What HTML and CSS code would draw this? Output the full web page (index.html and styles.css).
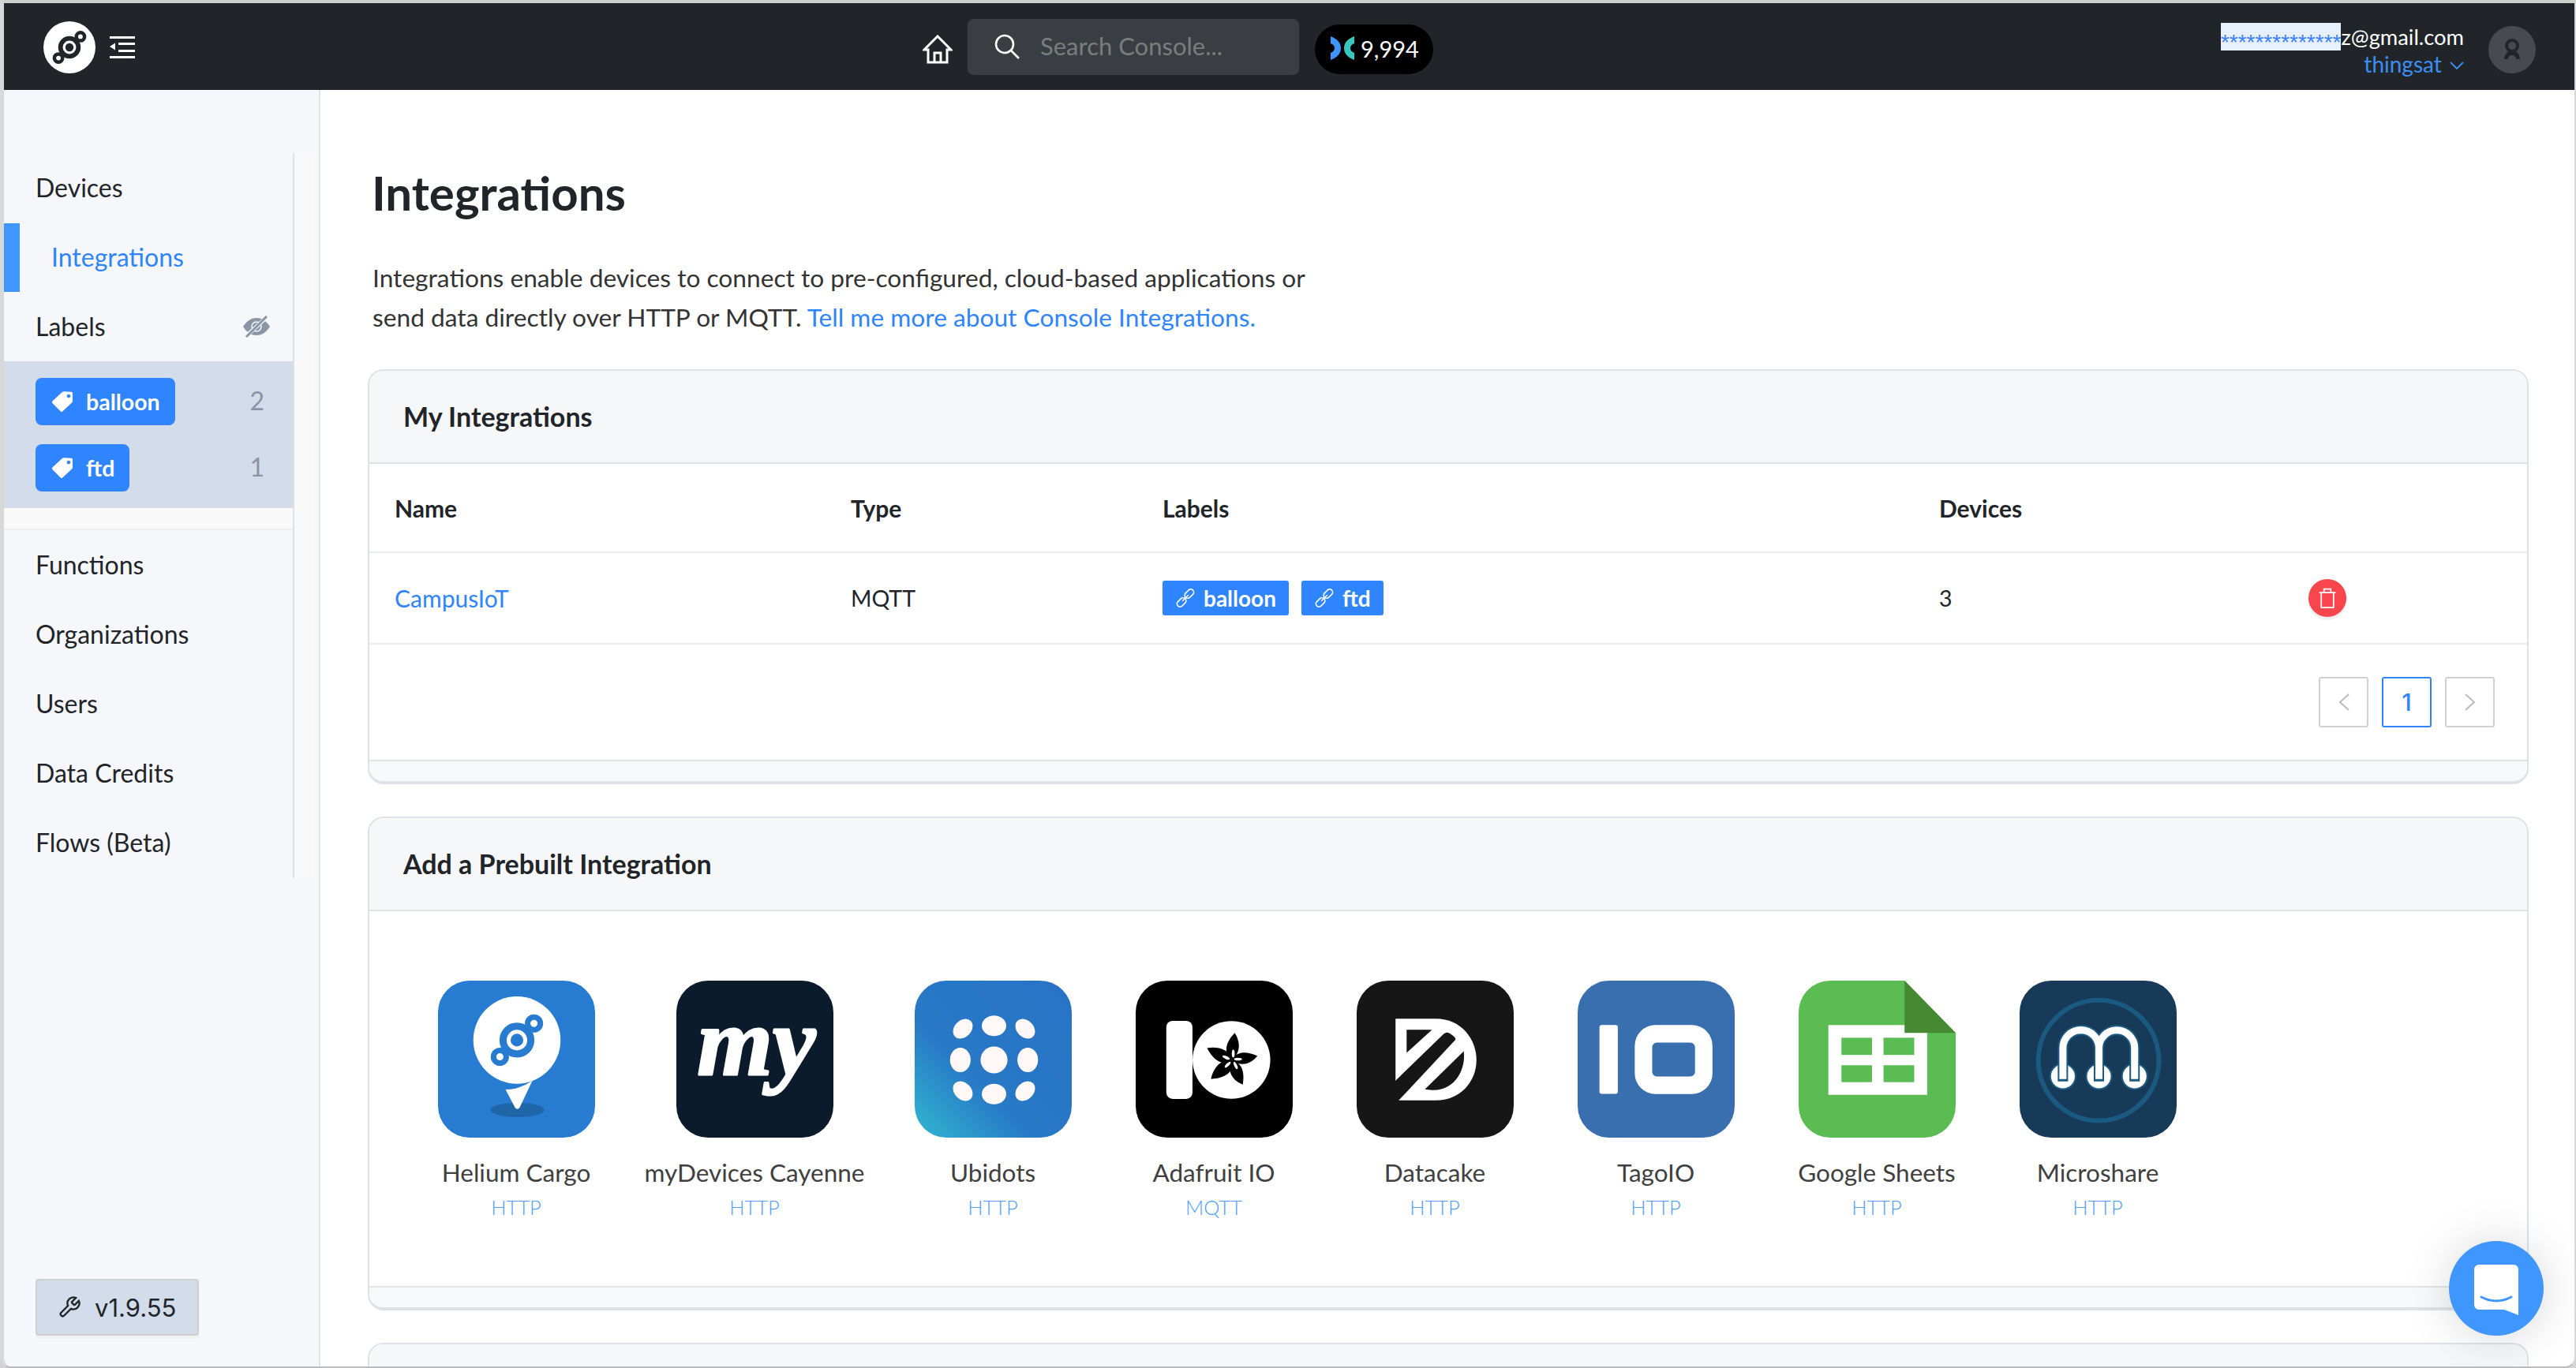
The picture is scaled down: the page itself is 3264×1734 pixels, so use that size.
FILE: index.html
```html
<!DOCTYPE html>
<html lang="en">
<head>
<meta charset="utf-8">
<title>Integrations</title>
<link rel="stylesheet" href="styles.css">
</head>
<body>
<svg class="defs" width="0" height="0" aria-hidden="true">
  <symbol id="tag" viewBox="0 0 26 26">
    <path d="M0.600 12.300 12.800 1Q13.700 .2 15 .2L24.500 .8Q26 1 26 2.500V12.500Q26 13.500 25.200 14.200L13.200 25.400Q12 26.400 10.800 25.400L.600 15.300Q-.600 13.800 .600 12.300Z M21 3.800a2.300 2.300 0 1 0 .01 0Z" fill="#fff" fill-rule="evenodd"/>
  </symbol>
  <symbol id="link" viewBox="0 0 24 24">
    <g fill="none" stroke="#fff" stroke-width="1.500">
      <rect x="13" y="1" width="7" height="12" rx="3.500" transform="rotate(45 16.500 7)"/>
      <rect x="4" y="11" width="7" height="12" rx="3.500" transform="rotate(45 7.500 17)"/>
      <path d="M8.500 15.500 15.500 8.500"/>
    </g>
  </symbol>
  <symbol id="helium" viewBox="-34 -34 68 68">
    <circle r="17.500" fill="none" stroke="currentColor" stroke-width="9"/>
    <circle r="8" fill="currentColor"/>
    <circle cx="21.500" cy="-21" r="8" fill="#fff" stroke="currentColor" stroke-width="7"/>
    <circle cx="-21.500" cy="21" r="8" fill="#fff" stroke="currentColor" stroke-width="7"/>
  </symbol>
</svg>
<div class="window">
  <header class="topbar">
    <div class="brand">
      <span class="brand-logo"><svg class="brand-mark"><use href="#helium"/></svg></span>
      <svg class="menu-icon" viewBox="0 0 32 28"><g fill="#fff"><rect width="32" height="3"/><rect x="11" y="8" width="21" height="3"/><rect x="11" y="17" width="21" height="3"/><rect y="25" width="32" height="3"/><path d="M0 13 7 8.500V17.500Z"/></g></svg>
    </div>
    <svg class="home-icon" viewBox="0 0 38 37" fill="none" stroke="#fff" stroke-width="3"><path d="M2 19 19 2l17 17h-5v16H7V19Z"/><path d="M15 35V23h8v12"/></svg>
    <div class="search">
      <svg class="search-icon" viewBox="0 0 32 32" fill="none" stroke="#fff" stroke-width="2.600"><circle cx="13" cy="13" r="11"/><path d="m21 21 10 10"/></svg>
      <span class="search-text">Search Console...</span>
    </div>
    <div class="credits">
      <svg class="credits-icon" viewBox="0 0 30 30"><path d="M0 0C8 3 13 8 13 15 13 22 8 27 0 30V21C3 20 5 18 5 15 5 12 3 10 0 9Z" fill="#3f96ff"/><path d="M30 0C22 3 17 8 17 15 17 22 22 27 30 30V21C27 20 25 18 25 15 25 12 27 10 30 9Z" fill="#38c6bd"/></svg>
      <span>9,994</span>
    </div>
    <div class="account">
      <div class="account-text">
        <div class="email"><span class="email-mask">**************</span><span>z@gmail.com</span></div>
        <div class="org">thingsat <svg class="org-chevron" viewBox="0 0 18 10" fill="none" stroke="#3b8ef3" stroke-width="1.800"><path d="m1 1 8 8 8-8"/></svg></div>
      </div>
      <div class="avatar"><svg viewBox="0 0 24 28" class="avatar-icon"><circle cx="12" cy="9" r="7" fill="none" stroke="#212529" stroke-width="4"/><path d="M2 26C2 20 6 17 8 16H16C18 17 22 20 22 26H17C17 23 15 21 12 21S7 23 7 26Z" fill="#212529"/></svg></div>
    </div>
  </header>
  <div class="body">
    <aside class="sidebar">
      <nav class="nav-track">
        <div class="nav">
          <div class="nav-item">Devices</div>
          <div class="nav-item nav-item-active">Integrations</div>
          <div class="nav-item nav-item-split">Labels
            <svg class="eye-icon" viewBox="0 0 34 28"><path d="M0 14C5 6 11 3 17 3S29 6 34 14C29 22 23 25 17 25S5 22 0 14Z" fill="#8a96a8"/><circle cx="17" cy="14" r="6" fill="none" stroke="#f6f7fa" stroke-width="1.500"/><path d="M3 27 31 1" stroke="#f6f7fa" stroke-width="5"/><path d="M4 27 30 1" stroke="#8a96a8" stroke-width="3"/></svg>
          </div>
          <div class="labels">
            <div class="label-row"><span class="tag"><svg class="tag-icon"><use href="#tag"/></svg>balloon</span><span class="count">2</span></div>
            <div class="label-row"><span class="tag"><svg class="tag-icon"><use href="#tag"/></svg>ftd</span><span class="count">1</span></div>
          </div>
          <div class="nav-gap"></div>
          <div class="nav-item">Functions</div>
          <div class="nav-item">Organizations</div>
          <div class="nav-item">Users</div>
          <div class="nav-item">Data Credits</div>
          <div class="nav-item">Flows (Beta)</div>
        </div>
      </nav>
      <div class="version"><svg class="wrench" viewBox="0 0 24 24" fill="none" stroke="#212529" stroke-width="1.900"><path d="M14.700 6.300a1 1 0 0 0 0 1.400l1.600 1.600a1 1 0 0 0 1.400 0l3.770-3.770a6 6 0 0 1-7.940 7.940l-6.910 6.910a2.120 2.120 0 0 1-3-3l6.910-6.910a6 6 0 0 1 7.940-7.940l-3.760 3.760z"/></svg>v1.9.55</div>
    </aside>
    <main class="content">
      <h1 class="title">Integrations</h1>
      <p class="intro">Integrations enable devices to connect to pre-configured, cloud-based applications or<br>send data directly over HTTP or MQTT. <a class="link">Tell me more about Console Integrations.</a></p>

      <section class="card">
        <div class="card-head">My Integrations</div>
        <div class="row row-head">
          <div>Name</div><div>Type</div><div>Labels</div><div>Devices</div><div></div>
        </div>
        <div class="row row-data">
          <div class="link link-cell">CampusIoT</div>
          <div>MQTT</div>
          <div class="chips">
            <span class="chip"><svg class="chip-icon"><use href="#link"/></svg>balloon</span>
            <span class="chip"><svg class="chip-icon"><use href="#link"/></svg>ftd</span>
          </div>
          <div>3</div>
          <div><span class="delete"><svg viewBox="0 0 24 30" class="delete-icon" fill="none" stroke="#fff" stroke-width="2"><path d="M0 7H24"/><path d="M3 7V29H21V7"/><path d="M7 7V2H17V7"/></svg></span></div>
        </div>
        <div class="pager-wrap">
          <span class="pager-btn"><svg viewBox="0 0 14 22" class="pager-chev" fill="none" stroke="#bbb" stroke-width="2"><path d="M13 1 2 11l11 10"/></svg></span>
          <span class="pager-btn pager-current">1</span>
          <span class="pager-btn"><svg viewBox="0 0 14 22" class="pager-chev" fill="none" stroke="#bbb" stroke-width="2"><path d="m1 1 11 10L1 21"/></svg></span>
        </div>
        <div class="card-foot"></div>
      </section>

      <section class="card">
        <div class="card-head">Add a Prebuilt Integration</div>
        <div class="apps">
          <div class="app">
            <svg class="app-icon" viewBox="0 0 198 198"><rect width="198" height="198" rx="40" fill="#277bd0"/><ellipse cx="100" cy="163" rx="34" ry="9" fill="#1f66a8"/><circle cx="99.500" cy="75" r="55" fill="#fff"/><path d="M85 137Q103 137 119 126L103 160Q100 164 97 160Z" fill="#fff"/><path d="M80 133Q95 137 107 132Q96 138 85 137Z" fill="#277bd0"/><svg x="65.500" y="41" width="68" height="68" color="#277bd0"><use href="#helium"/></svg></svg>
            <div class="app-name">Helium Cargo</div><div class="app-type">HTTP</div>
          </div>
          <div class="app app-wide">
            <svg class="app-icon" viewBox="0 0 198 198"><rect width="198" height="198" rx="40" fill="#0b1b2b"/><text x="101" y="118" text-anchor="middle" class="my-text">my</text></svg>
            <div class="app-name">myDevices Cayenne</div><div class="app-type">HTTP</div>
          </div>
          <div class="app">
            <svg class="app-icon" viewBox="0 0 198 198"><defs><linearGradient id="ubi" x1="0" y1="1" x2="1" y2="0"><stop offset="0" stop-color="#30b8d0"/><stop offset=".38" stop-color="#2879c6"/><stop offset="1" stop-color="#2872c6"/></linearGradient></defs><rect width="198" height="198" rx="40" fill="url(#ubi)"/><g fill="#fff8f6"><ellipse cx="100" cy="100" rx="17" ry="17"/><ellipse cx="100" cy="57" rx="15.400" ry="13"/><ellipse cx="100" cy="143" rx="15.400" ry="13"/><ellipse cx="57.500" cy="100" rx="13" ry="15.400"/><ellipse cx="142.500" cy="100" rx="13" ry="15.400"/><ellipse cx="60.700" cy="60.700" rx="14" ry="10.500" transform="rotate(-45 60.700 60.700)"/><ellipse cx="139.300" cy="60.700" rx="14" ry="10.500" transform="rotate(45 139.300 60.700)"/><ellipse cx="60.700" cy="139.300" rx="14" ry="10.500" transform="rotate(45 60.700 139.300)"/><ellipse cx="139.300" cy="139.300" rx="14" ry="10.500" transform="rotate(-45 139.300 139.300)"/></g></svg>
            <div class="app-name">Ubidots</div><div class="app-type">HTTP</div>
          </div>
          <div class="app">
            <svg class="app-icon" viewBox="0 0 198 198"><rect width="198" height="198" rx="40" fill="#000"/><rect x="38.600" y="50.700" width="33" height="98.500" rx="8" fill="#fff"/><circle cx="120.700" cy="100" r="49" fill="#fff"/><g fill="#000"><path d="M120.700 100C108 88 117 74 125 66 131 76 134 90 120.700 100Z"/><path d="M120.700 100C129 87 142 90 153.500 95 146 104 134 110 120.700 100Z"/><path d="M120.700 100C136 104 137 118 135 131 124 127 114 116 120.700 100Z"/><path d="M120.700 100C125 116 112 123 95 124 97 112 106 99 120.700 100Z"/><path d="M120.700 100C108 108 98 100 90 85 103 83 118 86 120.700 100Z"/></g><g fill="#fff"><ellipse cx="123" cy="92" rx="1.800" ry="5"/><ellipse cx="129" cy="99" rx="5" ry="1.800"/><ellipse cx="126" cy="107" rx="1.800" ry="5" transform="rotate(-25 126 107)"/><ellipse cx="116" cy="106" rx="1.800" ry="5" transform="rotate(45 116 106)"/><ellipse cx="114" cy="97" rx="5" ry="1.800" transform="rotate(25 114 97)"/></g></svg>
            <div class="app-name">Adafruit IO</div><div class="app-type">MQTT</div>
          </div>
          <div class="app">
            <svg class="app-icon" viewBox="0 0 198 198"><rect width="198" height="198" rx="40" fill="#161616"/><path d="M49 48H100C132 48 151 74 151 100 151 128 130 151 100 151H53L49 126Z" fill="#fff"/><g fill="#161616"><path d="M63 62H95L63 91Z"/><path d="M45 130 110 67Q114 64 118 67L122 70Q126 73 124 75L53 151H45Z"/><path d="M86 137 135 89C138 110 125 139 95 138Z"/></g></svg>
            <div class="app-name">Datacake</div><div class="app-type">HTTP</div>
          </div>
          <div class="app">
            <svg class="app-icon" viewBox="0 0 198 198"><rect width="198" height="198" rx="40" fill="#396fae"/><rect x="27.500" y="56" width="23.200" height="86.700" rx="3" fill="#fff"/><path fill="#fff" fill-rule="evenodd" d="M98 56h46a26 26 0 0 1 26 26v35a26 26 0 0 1-26 26H98a26 26 0 0 1-26-26V82a26 26 0 0 1 26-26Zm2 22a6 6 0 0 0-6 6v31a6 6 0 0 0 6 6h42a6 6 0 0 0 6-6V84a6 6 0 0 0-6-6Z"/></svg>
            <div class="app-name">TagoIO</div><div class="app-type">HTTP</div>
          </div>
          <div class="app">
            <svg class="app-icon" viewBox="0 0 198 198"><path d="M40 0H133.600L198 66V158A40 40 0 0 1 158 198H40A40 40 0 0 1 0 158V40A40 40 0 0 1 40 0Z" fill="#5bbc53"/><rect x="37.500" y="56" width="124.500" height="88" fill="#fff"/><path d="M133.600 0 198 66H133.600Z" fill="#458a33"/><g fill="#5bbc53"><rect x="54" y="72" width="38.500" height="21.700"/><rect x="107" y="72" width="38.700" height="21.700"/><rect x="54" y="106.700" width="38.500" height="21.300"/><rect x="107" y="106.700" width="38.700" height="21.300"/></g></svg>
            <div class="app-name">Google Sheets</div><div class="app-type">HTTP</div>
          </div>
          <div class="app">
            <svg class="app-icon" viewBox="0 0 198 198"><rect width="198" height="198" rx="40" fill="#173a58"/><circle cx="99.600" cy="100.700" r="76" fill="none" stroke="#1b5a80" stroke-width="6"/><g fill="#fff" stroke="#1b5a80" stroke-width="2"><circle cx="54.600" cy="120.700" r="16"/><circle cx="100" cy="120.700" r="16"/><circle cx="145" cy="120.700" r="16"/></g><path d="M54.600 127V85A22.700 22.700 0 0 1 100 85V127M100 85A22.500 22.500 0 0 1 145 85V127" fill="none" stroke="#1b5a80" stroke-width="13"/><path d="M54.600 124V85A22.700 22.700 0 0 1 100 85V124M100 85A22.500 22.500 0 0 1 145 85V124" fill="none" stroke="#fff" stroke-width="9"/></svg>
            <div class="app-name">Microshare</div><div class="app-type">HTTP</div>
          </div>
        </div>
        <div class="card-foot"></div>
      </section>

      <section class="card card-cut">
        <div class="card-head"></div>
      </section>
    </main>
  </div>
  <div class="chat">
    <svg class="chat-icon" viewBox="0 0 56 64"><path d="M6 0H50A6 6 0 0 1 56 6V64L38 57H6A6 6 0 0 1 0 51V6A6 6 0 0 1 6 0Z" fill="#fff"/><path d="M9 41Q28 51 47 41" fill="none" stroke="#3f96ff" stroke-width="3" stroke-linecap="round"/></svg>
  </div>
</div>
</body>
</html>
```

FILE: styles.css
```css
* { box-sizing: border-box; }
html, body { margin: 0; height: 100%; overflow: hidden; }
body {
  background: #d4d4d4;
  font-family: "Lato", "Liberation Sans", sans-serif;
  color: #212529;
}
.defs { position: absolute; }
.window {
  height: 1734px;
  border-top: 4px solid #cfcfcf;
  border-left: 5px solid #d8d8d8;
  border-right: 2px solid #d8d8d8;
  border-bottom: 2px solid #bdbdbd;
  border-radius: 0 0 14px 14px;
  background: #fff;
  overflow: hidden;
  display: flex;
  flex-direction: column;
  position: relative;
}

/* top bar */
.topbar {
  flex: none;
  height: 110px;
  background: #212529;
  display: flex;
  align-items: center;
}
.brand { width: 1164px; padding-left: 50px; display: flex; align-items: center; gap: 18px; margin-top: 2px; }
.brand-logo { width: 66px; height: 66px; border-radius: 50%; background: #fff; display: flex; align-items: center; justify-content: center; color: #212529; }
.brand-mark { width: 44px; height: 44px; }
.menu-icon { width: 32px; height: 28px; }
.home-icon { width: 38px; height: 37px; margin-top: 7px; }
.search {
  width: 420px; height: 71px; margin-left: 19px;
  background: #3a3e42; border-radius: 8px;
  display: flex; align-items: center; padding: 0 0 0 34px; gap: 26px;
}
.search-icon { width: 32px; height: 32px; }
.search-text { font-size: 31px; color: #7a7d80; padding-bottom: 2px; }
.credits {
  width: 150px; height: 63px; margin-left: 20px; margin-top: 6px;
  background: #000; border-radius: 32px;
  display: flex; align-items: center; padding: 0 0 2px 20px; gap: 8px;
  color: #fff; font-size: 29px;
}
.credits-icon { width: 30px; height: 30px; }
.account { margin-left: auto; padding-right: 49px; display: flex; align-items: center; gap: 31px; }
.account-text { margin-top: 8px; }
.email { font-size: 27.3px; line-height: 37px; color: #fff; display: flex; justify-content: flex-end; align-items: center; }
.email-mask { background: #e8f0fe; color: #3b82f6; height: 35px; padding-top: 14px; line-height: 21px; font-family: "Liberation Sans", sans-serif; font-size: 28px; }
.org { font-size: 28px; line-height: 33px; color: #3b8ef3; text-align: right; }
.org-chevron { width: 18px; height: 10px; margin-left: 3px; vertical-align: 4px; }
.avatar { width: 60px; height: 60px; border-radius: 50%; background: #474a4e; margin-top: 7px; display: flex; align-items: center; justify-content: center; }
.avatar-icon { width: 24px; height: 28px; }

/* layout */
.body { flex: 1; display: flex; min-height: 0; }

/* sidebar */
.sidebar {
  flex: none; width: 401px;
  background: #f6f7fa;
  border-right: 2px solid #dfe3ea;
  padding-top: 80px;
  display: flex; flex-direction: column; justify-content: space-between;
}
.nav-track { width: 394px; background: #f9f9f9; height: 919px; }
.nav { width: 368px; height: 100%; background: #f6f7fa; border-right: 2px solid #dee2e6; }
.nav-item { height: 88px; padding: 0 0 2px 40px; display: flex; align-items: center; font-size: 32px; }
.nav-item-active { color: #2f84ff; padding-left: 60px; position: relative; }
.nav-item-active::before { content: ""; position: absolute; left: 0; top: 1px; bottom: 0; width: 20px; background: #3f96ff; }
.nav-item-split { justify-content: space-between; padding-right: 29px; }
.eye-icon { width: 34px; height: 28px; margin-top: 2px; }
.labels { height: 186px; background: #d3dcea; padding: 21px 36px 0 40px; display: flex; flex-direction: column; gap: 24px; }
.label-row { display: flex; justify-content: space-between; align-items: center; height: 60px; }
.tag {
  height: 60px; padding: 0 19px 0 21px; background: #2f84ff; color: #fff; border-radius: 8px;
  display: flex; align-items: center; gap: 17px; font-size: 28.5px; font-weight: 700;
}
.tag-icon { width: 26px; height: 26px; }
.count { font-size: 32px; color: #8a94a6; padding-bottom: 4px; }
.nav-gap { height: 28px; background: #f9f9f9; border-bottom: 2px solid #eeeeee; }
.version {
  width: 207px; height: 72px; margin: 0 0 39px 40px;
  background: #d3dcea; border: 2px solid #cfcfcf; border-radius: 4px;
  box-shadow: 0 4px 0 #f0f1f4;
  display: flex; align-items: center; padding-left: 26px; gap: 17px;
  font-family: "Inter", sans-serif; font-size: 31px;
}
.wrench { width: 30px; height: 30px; }

/* content */
.content { flex: 1; min-width: 0; padding: 97px 58px 0 60px; overflow: hidden; }
.title { margin: 0 0 0 5px; height: 70px; line-height: 66px; font-size: 60px; font-weight: 700; color: #212529; }
.intro { margin: 46px 0 41px 6px; font-size: 31.7px; line-height: 50px; color: #333; }
.link { color: #2f84ff; }

.card { border: 2px solid #dee2e6; border-bottom-width: 4px; border-radius: 20px; margin-bottom: 41px; overflow: hidden; }
.card-head {
  height: 118px; background: #f6f7f9; border-bottom: 2px solid #dee2e6;
  padding: 0 0 2px 43px; display: flex; align-items: center;
  font-size: 34px; font-weight: 700; color: #212529;
}
.card-foot { height: 27px; background: #f8f9fa; border-top: 2px solid #e2e4e6; }
.card-cut { margin-bottom: 0; height: 200px; }

.row {
  display: grid; grid-template-columns: 578px 395px 984px 468px 1fr;
  padding-left: 32px; align-items: center; font-size: 30px;
  border-bottom: 2px solid #ececec;
}
.row-head { height: 113px; font-weight: 700; }
.row-data { height: 116px; font-size: 28.5px; }
.link-cell { font-size: 30px; }
.chips { display: flex; gap: 16px; }
.chip {
  height: 44px; padding: 0 16px; background: #2f84ff; color: #fff; border-radius: 3px;
  display: flex; align-items: center; gap: 10px; font-size: 28px; font-weight: 700;
}
.chip-icon { width: 26px; height: 26px; }
.delete { width: 48px; height: 48px; border-radius: 50%; background: #f9464c; box-shadow: 0 4px 0 #f0f0f0; display: flex; align-items: center; justify-content: center; }
.delete-icon { width: 22px; height: 26px; }
.pager-wrap { height: 146px; display: flex; justify-content: flex-end; gap: 17px; padding: 41px 41px 0 0; }
.pager-btn {
  width: 63px; height: 64px; border: 2px solid #d0d0d0; border-radius: 3px;
  display: flex; align-items: center; justify-content: center;
  font-size: 30px; font-weight: 500; color: #2f84ff; font-family: "Inter", sans-serif;
}
.pager-current { border-color: #2f84ff; }
.pager-chev { width: 14px; height: 22px; }

.apps { height: 475px; padding: 88px 0 0 86px; display: flex; gap: 80px; }
.app { width: 200px; flex: none; display: flex; flex-direction: column; align-items: center; }
.app-wide { width: 244px; }
.app-icon { width: 199px; height: 199px; flex: none; }
.app-name { margin-top: 24px; font-size: 31.5px; line-height: 40px; color: #404040; white-space: nowrap; }
.app-type { margin-top: 10px; font-size: 25.5px; line-height: 28px; color: #4f9dff; font-weight: 300; }
.my-text { font-family: "Liberation Serif", serif; font-style: italic; font-weight: 700; font-size: 122px; fill: #fff; stroke: #fff; stroke-width: 3px; stroke-linejoin: round; }

/* chat */
.chat {
  position: absolute; right: 39px; bottom: 39px; width: 120px; height: 120px; border-radius: 50%;
  background: #3f96ff; box-shadow: 0 2px 60px rgba(0,0,0,.16);
  display: flex; align-items: center; justify-content: center;
}
.chat-icon { width: 56px; height: 64px; margin-top: 4px; }
```
